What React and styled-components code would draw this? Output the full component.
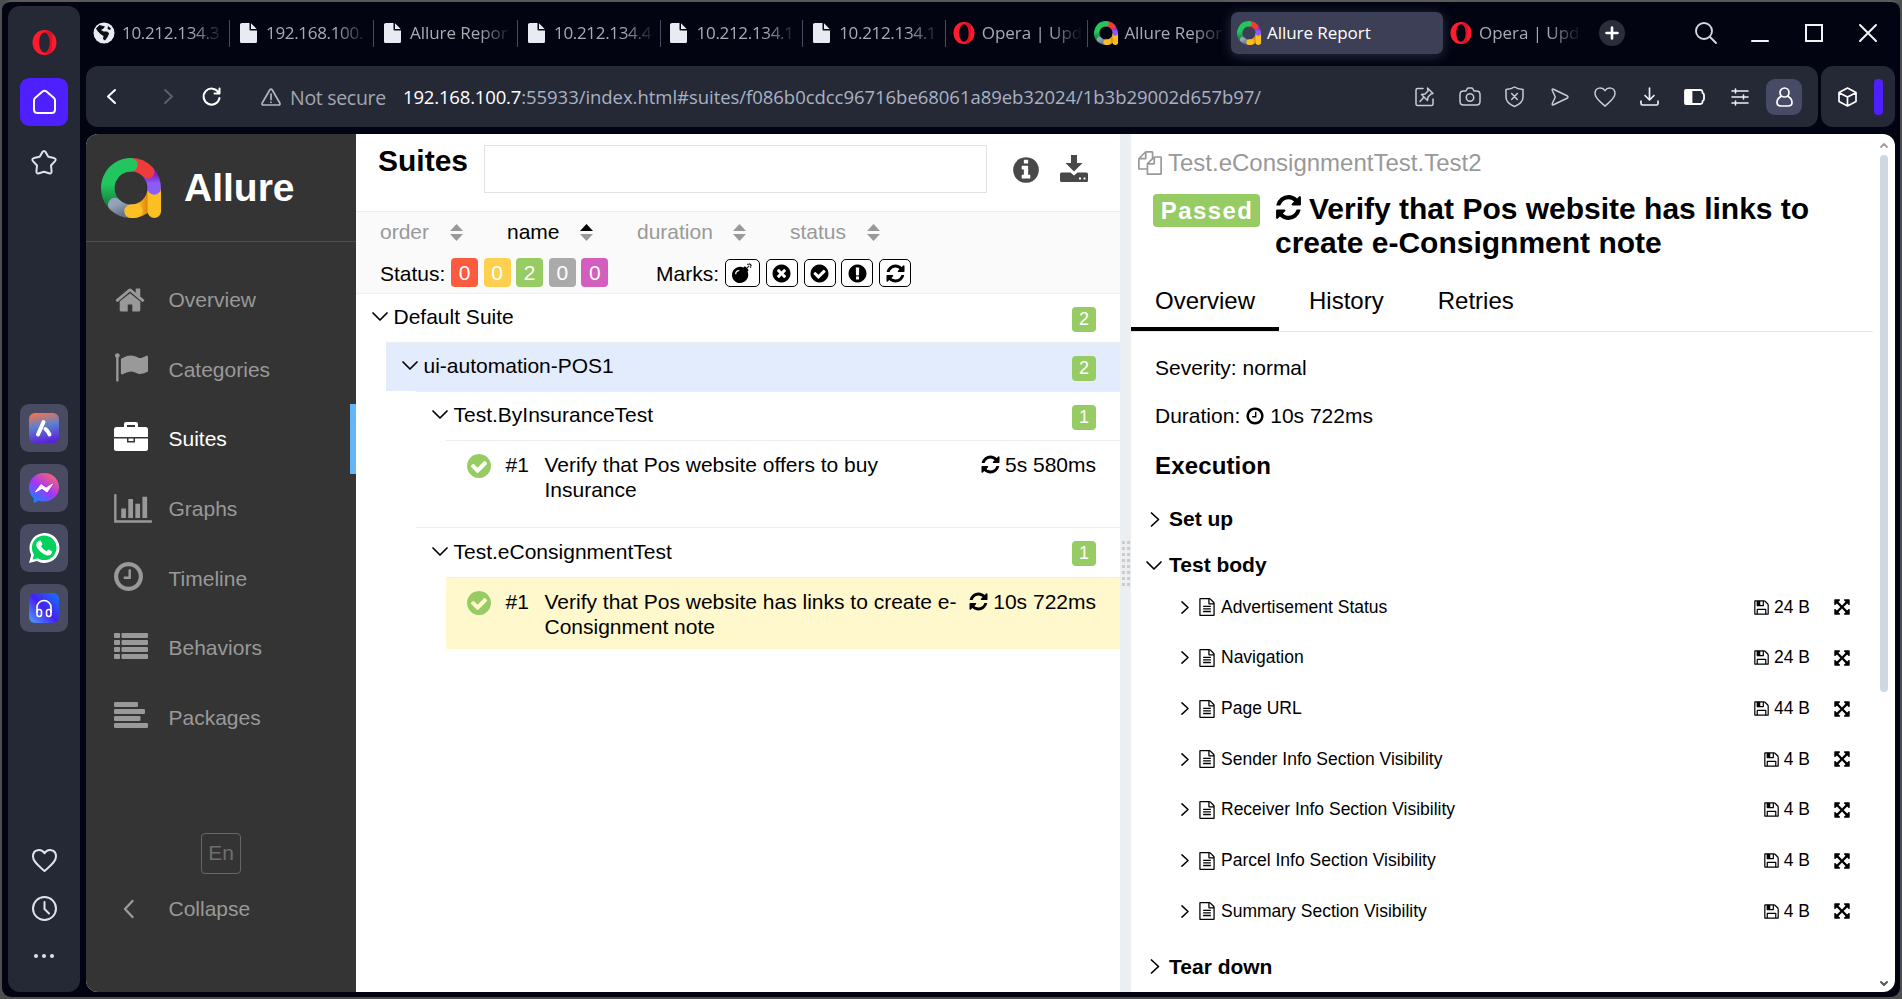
import React from "react";
import styled, { createGlobalStyle, css } from "styled-components";
import { FaBomb } from "react-icons/fa";

const Global = createGlobalStyle`
  *, *::before, *::after { box-sizing: border-box; }
  html, body, #root { height: 100%; margin: 0; }
  body { background: #4d4e50; overflow: hidden; font-family: "Liberation Sans", Arial, sans-serif; }
`;

/* ---------- icons ---------- */

const CIRCLE = "q0 209-103 385.5t-279.5 279.5-385.5 103-385.5-103-279.5-279.5-103-385.5 103-385.5 279.5-279.5 385.5-103 385.5 103 279.5 279.5 103 385.5z";

const GLYPHS = {
  home: "M1472 992v480q0 26-19 45t-45 19h-384v-384h-256v384h-384q-26 0-45-19t-19-45v-480q0-1 .5-3t.5-3l575-474 575 474q1 2 1 6zm223-69l-62 74q-8 9-21 11h-3q-13 0-21-7l-692-577-692 577q-12 8-24 7-13-2-21-11l-62-74q-8-10-7-23.5t11-21.5l719-599q32-26 76-26t76 26l244 204v-195q0-14 9-23t23-9h192q14 0 23 9t9 23v408l219 182q10 8 11 21.5t-7 23.5z",
  flag: "M256 192q0 72-64 110v1266q0 13-9.5 22.5t-22.5 9.5h-64q-13 0-22.5-9.5t-9.5-22.5v-1266q-64-38-64-110 0-53 37.5-90.5t90.5-37.5 90.5 37.5 37.5 90.5zm1536 64v763q0 25-12.5 38.5t-39.5 27.5q-215 116-369 116-61 0-123.5-22t-108.5-48-115.5-48-142.5-22q-192 0-464 146-17 9-33 9-26 0-45-19t-19-45v-742q0-32 31-55 21-14 79-43 236-120 421-120 107 0 200 29t219 88q38 19 88 19 54 0 117.5-21t110-47 88-47 54.5-21q26 0 45 19t19 45z",
  chart: "M640 896v512h-256v-512h256zm384-512v1024h-256v-1024h256zm1024 1152v128h-2048v-1536h128v1408h1920zm-640-896v768h-256v-768h256zm384-384v1152h-256v-1152h256z",
  clock: "M1024 544v448q0 14-9 23t-23 9h-320q-14 0-23-9t-9-23v-64q0-14 9-23t23-9h224v-352q0-14 9-23t23-9h64q14 0 23 9t9 23zm416 352q0-148-73-273t-198-198-273-73-273 73-198 198-73 273 73 273 198 198 273 73 273-73 198-198 73-273zm224 0" + CIRCLE,
  refresh: "M1639 1056q0 5-1 7-64 268-268 434.5t-478 166.5q-146 0-282.5-55t-243.5-157l-129 129q-19 19-45 19t-45-19-19-45v-448q0-26 19-45t45-19h448q26 0 45 19t19 45-19 45l-137 137q71 66 161 102t187 36q134 0 250-65t186-179q11-17 53-117 8-23 30-23h192q13 0 22.5 9.5t9.5 22.5zm25-800v448q0 26-19 45t-45 19h-448q-26 0-45-19t-19-45 19-45l138-138q-148-137-349-137-134 0-250 65t-186 179q-11 17-53 117-8 23-30 23h-199q-13 0-22.5-9.5t-9.5-22.5v-7q65-268 270-434.5t480-166.5q146 0 284 55.5t245 156.5l130-129q19-19 45-19t45 19 19 45z",
  check: "M1412 734q0-28-18-46l-91-90q-19-19-45-19t-45 19l-408 407-226-226q-19-19-45-19t-45 19l-91 90q-18 18-18 46 0 27 18 45l362 362q19 19 45 19 27 0 46-19l543-543q18-18 18-45zm252 162" + CIRCLE,
  times: "M1277 1122q0-26-19-45l-181-181 181-181q19-19 19-45 0-27-19-46l-90-90q-19-19-46-19-26 0-45 19l-181 181-181-181q-19-19-45-19-27 0-46 19l-90 90q-19 19-19 46 0 26 19 45l181 181-181 181q-19 19-19 45 0 27 19 46l90 90q19 19 46 19 26 0 45-19l181-181 181 181q19 19 45 19 27 0 46-19l90-90q19-19 19-46zm387-226" + CIRCLE,
  exclamation: "M896 128q209 0 385.5 103t279.5 279.5 103 385.5-103 385.5-279.5 279.5-385.5 103-385.5-103-279.5-279.5-103-385.5 103-385.5 279.5-279.5 385.5-103zm128 1247v-190q0-14-9-23.5t-22-9.5h-192q-13 0-23 10t-10 23v190q0 13 10 23t23 10h192q13 0 22-9.5t9-23.5zm-2-344l18-621q0-12-10-18-10-8-24-8h-220q-14 0-24 8-10 6-10 18l17 621q0 10 10 17.5t24 7.5h185q14 0 23.5-7.5t10.5-17.5z",
  info: "M1152 1376v-160q0-14-9-23t-23-9h-96v-512q0-14-9-23t-23-9h-320q-14 0-23 9t-9 23v160q0 14 9 23t23 9h96v320h-96q-14 0-23 9t-9 23v160q0 14 9 23t23 9h448q14 0 23-9t9-23zm-128-896v-160q0-14-9-23t-23-9h-192q-14 0-23 9t-9 23v160q0 14 9 23t23 9h192q14 0 23-9t9-23zm640 416" + CIRCLE,
  floppy: "M512 1536h768v-384h-768v384zm896 0h128v-896q0-14-10-38.5t-20-34.5l-281-281q-10-10-34-20t-39-10v416q0 40-28 68t-68 28h-576q-40 0-68-28t-28-68v-416h-128v1280h128v-416q0-40 28-68t68-28h832q40 0 68 28t28 68v416zm-384-928v-320q0-13-9.5-22.5t-22.5-9.5h-192q-13 0-22.5 9.5t-9.5 22.5v320q0 13 9.5 22.5t22.5 9.5h192q13 0 22.5-9.5t9.5-22.5zm640 32v928q0 40-28 68t-68 28h-1344q-40 0-68-28t-28-68v-1344q0-40 28-68t68-28h928q40 0 88 20t76 48l280 280q28 28 48 76t20 88z",
  file: "M1596 380q28 28 48 76t20 88v1152q0 40-28 68t-68 28h-1344q-40 0-68-28t-28-68v-1600q0-40 28-68t68-28h896q40 0 88 20t76 48zm-444-244v376h376q-10-29-22-41l-313-313q-12-12-41-22zm384 1528v-1024h-416q-40 0-68-28t-28-68v-416h-768v1536h1280zm-1024-896h768v128h-768zm0 256h768v128h-768zm0 256h768v128h-768z",
  expand: "M1411 541l-355 355 355 355 144-144q29-31 70-14 39 17 39 59v448q0 26-19 45t-45 19h-448q-42 0-59-40-17-39 14-69l144-144-355-355-355 355 144 144q31 30 14 69-17 40-59 40h-448q-26 0-45-19t-19-45v-448q0-42 40-59 39-17 69 14l144 144 355-355-355-355-144 144q-19 19-45 19-12 0-24-5-40-17-40-59v-448q0-26 19-45t45-19h448q42 0 59 40 17 39-14 69l-144 144 355 355 355-355-144-144q-31-30-14-69 17-40 59-40h448q26 0 45 19t19 45v448q0 42-39 59-13 5-25 5-26 0-45-19z",
  files: "M1696 384q40 0 68 28t28 68v1216q0 40-28 68t-68 28h-960q-40 0-68-28t-28-68v-288h-544q-40 0-68-28t-28-68v-672q0-40 20-88t48-76l408-408q28-28 76-48t88-20h416q40 0 68 28t28 68v328q68-40 128-40h416zm-544 213l-299 299h299v-299zm-640-384l-299 299h299v-299zm196 647l316-316v-416h-384v416q0 40-28 68t-68 28h-416v640h512v-256q0-40 20-88t48-76zm956 804v-1152h-384v416q0 40-28 68t-68 28h-416v640h896z",
};

const Svg = styled.svg`
  display: block;
  flex: none;
  overflow: visible;
  width: ${(p) => p.$w}px;
  height: ${(p) => p.$h || p.$w}px;
`;

const Glyph = ({ name, size, color = "currentColor" }) => (
  <Svg $w={size} viewBox="0 0 1792 1792" fill={color}><path d={GLYPHS[name]} /></Svg>
);

const Line = ({ w, h = w, box, sw = 1.5, color = "currentColor", children }) => (
  <Svg $w={w} $h={h} viewBox={box || `0 0 ${w} ${h}`} fill="none" stroke={color} strokeWidth={sw} strokeLinecap="round" strokeLinejoin="round">{children}</Svg>
);

const AllureLogo = ({ size, id }) => (
  <Svg $w={size} viewBox="0 0 60 60" fill="none" strokeLinecap="round" strokeWidth="13.5">
    <defs>
      <linearGradient id={id + "g"} x1="0" y1="0" x2="0" y2="1"><stop offset=".5" stopColor="#22c55e" /><stop offset="1" stopColor="#15803d" /></linearGradient>
      <linearGradient id={id + "p"} x1="0" y1="0" x2="0" y2="1"><stop offset=".1" stopColor="#7e22ce" /><stop offset=".7" stopColor="#8b5cf6" /></linearGradient>
      <linearGradient id={id + "s"} x1="0" y1="0" x2="1" y2="1"><stop offset="0" stopColor="#94a3b8" /><stop offset="1" stopColor="#64748b" /></linearGradient>
      <linearGradient id={id + "y"} x1="0" y1="0" x2="1" y2="0"><stop offset=".3" stopColor="#fbbf24" /><stop offset=".8" stopColor="#d97706" /></linearGradient>
    </defs>
    <path d="M53.3 30A23.3 23.3 0 0 1 30 53.2" stroke={`url(#${id}y)`} strokeLinecap="butt" />
    <path d="M53.3 34V53.2" stroke="#fbbf24" />
    <path d="M48 15.500A23.3 23.3 0 0 1 53.2 30" stroke={`url(#${id}p)`} />
    <path d="M30 6.8A23.3 23.3 0 0 1 46.8 13.900" stroke="#ef3b3b" />
    <path d="M13.500 46.500A23.3 23.3 0 0 1 30 6.8" stroke={`url(#${id}g)`} />
    <path d="M30 53.2A23.3 23.3 0 0 1 13.700 46.600" stroke={`url(#${id}s)`} />
    <path d="M30 53.200q3 0 5-.4" stroke="#fbbf24" />
  </Svg>
);

const OperaLogo = ({ size }) => (
  <Svg $w={size} viewBox="0 0 24 24">
    <path fillRule="evenodd" fill="#ff1b2d" d="M12 0C5.300 0 .5 5.300.5 12S5.300 24 12 24 23.500 18.700 23.500 12 18.700 0 12 0zM12 2.400c2.900 0 5.100 4.200 5.100 9.600s-2.200 9.600-5.100 9.600S6.900 17.400 6.900 12 9.100 2.400 12 2.400z" />
    <path fill="#a70014" d="M12 2.400c2-1.600 5-1.500 7.200.3 1.500 1.500-1 18 0 18.600-2.200 1.800-5.200 1.900-7.200.3 2.900 0 5.100-4.200 5.100-9.600S14.900 2.400 12 2.400z" opacity=".35" />
  </Svg>
);

const DocIcon = () => (
  <Svg $w={17} $h={20} viewBox="0 0 17 20"><path fill="#e8ebf1" d="M2 0h7.500v6.500q0 1 1 1H17V18.500q0 1.500-1.500 1.500h-14Q0 20 0 18.500V1.500Q0 0 2 0zM11 .3 16.700 6H11z" /></Svg>
);

const GlobeIcon = () => (
  <Svg $w={22} viewBox="0 0 22 22"><circle cx="11" cy="11" r="10.5" fill="#e8ebf1" /><path fill="#0b0d18" d="M3 6.500 6.500 3l5.500 1.500-1.500 2L8 8l2.500 1.500h3.700l2 2-1.700 3.500-2.500 3.500-2-1.500.5-3-2.500-1.500L4.500 9zM15 4l3 2.500-1 1.500-2.500-1z" /></Svg>
);

const Chevron = ({ open, small }) =>
  open ? (
    <Line w={16} h={9} sw={1.7}><path d="M1 1l7 7 7-7" /></Line>
  ) : (
    <Line w={small ? 8 : 10} h={small ? 13 : 15} box="0 0 9 15" sw={1.7}><path d="M1 1l7 6.500L1 14" /></Line>
  );

const SortArrows = ({ up }) => (
  <Svg $w={13} $h={17} viewBox="0 0 13 17"><path d="M0 7 6.500 0 13 7z" fill={up ? "#000" : "#999"} /><path d="M0 10h13L6.500 17z" fill="#999" /></Svg>
);

const Heart = ({ w, sw }) => (
  <Line w={w} h={w - 2} box="0 0 25 23" sw={sw}><path d="M12.500 4.200C9.500-.5 1 0 1 7.500c0 5.500 6 9.500 11.500 14.500C18 17 24 13 24 7.500 24 0 15.500-.5 12.500 4.200z" /></Line>
);

/* ---------- browser window ---------- */

const Window = styled.div`
  width: 1898px;
  height: 997px;
  margin: 0 2px;
  border-top: 2px solid #5a5a58;
  padding: 4px 5px 5px 6px;
  display: flex;
  gap: 6px;
  background: #020412;
  border-radius: 9px;
  overflow: hidden;
`;

const Rail = styled.nav`
  width: 72px;
  height: 986px;
  flex: none;
  border-radius: 12px;
  background: #252936;
  color: #dfe2ea;
  display: flex;
  flex-direction: column;
  align-items: center;
`;

const RailSlot = styled.div`
  width: 48px;
  height: 48px;
  flex: none;
  margin-bottom: ${(p) => p.$after || 0}px;
  border-radius: 9px;
  display: flex;
  align-items: center;
  justify-content: center;
  background: ${(p) => p.$bg || "transparent"};
`;

const AppTile = styled(RailSlot)`
  background: #484b61;
  margin-bottom: 12px;
`;

const Spacer = styled.div`
  height: ${(p) => p.$h}px;
  flex: none;
`;

const Main = styled.div`
  width: 1809px;
  flex: none;
  display: flex;
  flex-direction: column;
`;

const chromeFont = css`
  font-family: "Open Sans", "Noto Sans", sans-serif;
`;

const TabStrip = styled.div`
  ${chromeFont}
  height: 60px;
  display: flex;
  align-items: flex-start;
  padding-top: 6px;
`;

const Tab = styled.div`
  width: ${(p) => p.$w || 142.6}px;
  height: 42px;
  flex: none;
  display: flex;
  align-items: center;
  padding-left: 6px;
  border-radius: ${(p) => (p.$active ? 7 : 0)}px;
  background: ${(p) => (p.$active ? "#3c3f55" : "transparent")};
  box-shadow: ${(p) => (p.$active ? "0 2px 12px #45495e99" : "none")};
  color: ${(p) => (p.$active ? "#fff" : "#a9abb3")};
  &::after {
    content: "";
    width: ${(p) => (p.$sep ? 1 : 0)}px;
    height: 27px;
    background: #484b60;
  }
`;

const TabIcon = styled.div`
  width: 24px;
  flex: none;
  display: flex;
  justify-content: center;
`;

const TabTitle = styled.div`
  width: 101px;
  flex: 1;
  margin: 0 2px 0 6px;
  height: 26px;
  line-height: 25px;
  font-size: 17px;
  letter-spacing: ${(p) => p.$ls}px;
  white-space: nowrap;
  ${(p) => !p.$full && css`mask-image: linear-gradient(90deg, #000 66%, transparent 98%);`}
`;

const NewTab = styled.div`
  width: 26px;
  height: 26px;
  margin: 8px 70px 0 13px;
  flex: none;
  border-radius: 50%;
  background: #2b2e3a;
  display: flex;
  align-items: center;
  justify-content: center;
  color: #fff;
`;

const WinButton = styled.div`
  width: ${(p) => p.$w}px;
  height: 42px;
  flex: none;
  display: flex;
  align-items: center;
  justify-content: center;
  color: #f4f4f6;
`;

const BarRow = styled.div`
  display: flex;
  gap: 3px;
  height: 61px;
  margin-bottom: 7px;
`;

const Bar = styled.div`
  ${chromeFont}
  width: ${(p) => p.$w}px;
  flex: none;
  border-radius: 12px;
  background: #252936;
  display: flex;
  align-items: center;
`;

const BarIcon = styled.div`
  width: ${(p) => p.$w || 45}px;
  height: 36px;
  flex: none;
  display: flex;
  align-items: center;
  justify-content: center;
  color: ${(p) => p.$color || "#c9cbd3"};
`;

const Warning = styled(BarIcon)`
  width: 20px;
  margin-left: 38px;
  color: #b3b5be;
`;

const Profile = styled(BarIcon)`
  width: 36px;
  margin-left: 4px;
  border-radius: 9px;
  background: #484b66;
  color: #fff;
`;

const NotSecure = styled.span`
  margin: 1px 0 0 9px;
  width: 113px;
  flex: none;
  font-size: 19.5px;
  letter-spacing: -0.3px;
  color: #a3a6b1;
  white-space: nowrap;
`;

const Url = styled.span`
  width: 999px;
  flex: none;
  font-size: 18.5px;
  letter-spacing: -0.04px;
  color: #a9b1c3;
  white-space: nowrap;
  b { font-weight: 400; color: #fff; letter-spacing: -0.17px; }
`;

const PurpleBar = styled.div`
  width: 9px;
  height: 36px;
  border-radius: 4px;
  background: #4e1fff;
`;

/* ---------- report ---------- */

const Report = styled.div`
  height: 858px;
  border-radius: 12px;
  overflow: hidden;
  display: flex;
  background: #fff;
  font-size: 21px;
  color: #000;
`;

const Side = styled.aside`
  width: 270px;
  flex: none;
  background: #343434;
  color: #999;
  display: flex;
  flex-direction: column;
`;

const Brand = styled.div`
  height: 108px;
  padding-left: 15px;
  margin-bottom: 23px;
  border-bottom: 1px solid #4d4d4d;
  display: flex;
  align-items: center;
  gap: 23px;
  color: #fff;
  font-size: 39px;
  font-weight: 700;
`;

const NavItem = styled.div`
  height: 69.7px;
  flex: none;
  padding-left: 28px;
  display: flex;
  align-items: center;
  color: ${(p) => (p.$active ? "#fff" : "#999")};
  border-right: 6px solid ${(p) => (p.$active ? "#64b5f6" : "transparent")};
`;

const NavIcon = styled.div`
  width: 54.5px;
  padding: 0 0 ${(p) => p.$up || 0}px ${(p) => p.$x || 0}px;
`;

const Lang = styled.div`
  width: 40px;
  height: 41px;
  flex: none;
  margin: 80px 0 0 115px;
  border: 1px solid #666;
  border-radius: 4px;
  display: flex;
  align-items: center;
  justify-content: center;
  color: #6e6e6e;
`;

const ListPane = styled.section`
  width: 764px;
  flex: none;
`;

const ListHead = styled.header`
  height: 77px;
  padding-left: 22px;
  display: flex;
  align-items: flex-start;
  color: #484848;
  h1 { margin: 10px 0 0; width: 106px; font-size: 30px; line-height: 34px; color: #000; }
`;

const SearchBox = styled.div`
  width: 503px;
  height: 48px;
  margin: 11px 24px 0 0;
  border: 1px solid #e2e2e2;
`;

const HeadIcon = styled.div`
  margin-top: ${(p) => p.$top}px;
  width: ${(p) => p.$w}px;
`;

const Controls = styled.div`
  height: 83px;
  border-top: 1px solid #eceff1;
  border-bottom: 1px solid #eceff1;
  background: #fafafa;
`;

const SortRow = styled.div`
  height: 39px;
  padding-left: 24px;
  display: flex;
  align-items: center;
`;

const Sorter = styled.div`
  display: flex;
  align-items: center;
  justify-content: space-between;
  width: ${(p) => p.$w}px;
  margin-right: 44px;
  color: ${(p) => (p.$active ? "#000" : "#999")};
  svg { margin-top: 2px; }
`;

const FilterRow = styled.div`
  height: 42px;
  padding: 7px 0 0 24px;
  display: flex;
  align-items: flex-start;
`;

const FilterLabel = styled.div`
  width: ${(p) => p.$w}px;
  height: 30px;
  line-height: 32px;
  margin-left: ${(p) => p.$x || 0}px;
`;

const StatusBox = styled.div`
  width: 27px;
  height: 29px;
  margin-right: 5.6px;
  border-radius: 4px;
  line-height: 29px;
  text-align: center;
  color: #fff;
  background: ${(p) => p.$bg};
`;

const MarkBox = styled.div`
  width: ${(p) => p.$w || 32}px;
  height: 28px;
  margin: 1px 5.8px 0 0;
  border: 1px solid #000;
  border-radius: 5px;
  background: #fff;
  display: flex;
  align-items: center;
  justify-content: center;
`;

const Node = styled.div`
  height: ${(p) => p.$h || 49}px;
  margin-left: ${(p) => p.$x}px;
  padding: 0 24px 0 16px;
  display: flex;
  align-items: center;
  gap: 5.5px;
  background: ${(p) => (p.$selected ? "#e3ecfd" : "transparent")};
  border-top: ${(p) => (p.$line ? "1px solid #eceff1" : "0")};
  > svg { margin-bottom: 3px; }
`;

const NodeName = styled.div`
  flex: 1;
  height: 24px;
  line-height: 22px;
`;

const Count = styled.div`
  width: 24px;
  height: 25px;
  margin-top: 2px;
  border-radius: 4px;
  background: #97cc64;
  color: #fff;
  font-size: 18px;
  line-height: 25px;
  text-align: center;
`;

const Leaf = styled.div`
  height: ${(p) => p.$h}px;
  margin-left: 90px;
  padding: 11px 24px 0 19px;
  display: flex;
  line-height: 25px;
  border-top: 1px solid #eceff1;
  background: ${(p) => (p.$selected ? "#fff8cd" : "transparent")};
`;

const LeafStatus = styled.div`
  width: 40.5px;
`;

const LeafNumber = styled.div`
  width: 39px;
`;

const LeafName = styled.div`
  width: 415px;
  white-space: pre-line;
`;

const LeafTime = styled.div`
  flex: 1;
  display: flex;
  justify-content: flex-end;
  align-items: center;
  gap: 4px;
  height: 25px;
  white-space: nowrap;
`;

const Splitter = styled.div`
  width: 11px;
  flex: none;
  background: #eceff1;
  display: flex;
  align-items: flex-start;
  justify-content: flex-end;
  padding: 407px 1px 0 0;
`;

const Grip = styled.div`
  display: grid;
  grid-template-columns: 3px 3px;
  gap: 3px 2px;
  i { height: 3px; background: #ccc; }
`;

const Detail = styled.section`
  width: 742px;
  flex: none;
`;

const Crumb = styled.div`
  height: 48px;
  padding: 9px 0 0 7px;
  display: flex;
  align-items: center;
  gap: 6px;
  font-size: 24px;
  color: #999;
`;

const TitleRow = styled.div`
  height: 84px;
  padding: 10px 0 0 22px;
  display: flex;
  align-items: flex-start;
`;

const Passed = styled.div`
  width: 107px;
  height: 33px;
  margin: 2px 15px 0 0;
  border-radius: 4px;
  background: #97cc64;
  color: #fff;
  font-size: 24px;
  font-weight: 700;
  letter-spacing: 1.4px;
  line-height: 34px;
  padding-left: 1px;
  text-align: center;
`;

const Title = styled.h2`
  margin: 0;
  width: 560px;
  font-size: 30px;
  line-height: 34px;
  svg { display: inline-block; vertical-align: -3px; margin: 0 6px 0 -1px; }
`;

const Tabs = styled.div`
  height: 66px;
  display: flex;
  gap: 6px;
  border-bottom: 1px solid #e5e5e5;
`;

const DetailTab = styled.div`
  height: 65px;
  padding: 20px 24px 0;
  line-height: 30px;
  font-size: 24px;
  border-bottom: ${(p) => (p.$active ? "4px solid #000" : "0")};
`;

const Facts = styled.div`
  padding: 12px 0 0 24px;
`;

const Fact = styled.div`
  height: 48px;
  display: flex;
  align-items: center;
  gap: 5px;
`;

const Execution = styled.h3`
  margin: 0;
  height: 56px;
  line-height: 51px;
  font-size: 24px;
  letter-spacing: 0.15px;
`;

const Stage = styled.div`
  height: ${(p) => p.$h}px;
  padding-left: 15px;
  display: flex;
  align-items: center;
  font-weight: 700;
`;

const StageArrow = styled.div`
  width: 23px;
  display: flex;
  padding-left: ${(p) => (p.$open ? 0 : 4)}px;
`;

const Attachments = styled.div`
  margin-top: -6px;
`;

const Attachment = styled.div`
  height: 50.67px;
  padding: 0 22px 0 50px;
  display: flex;
  align-items: center;
  font-size: 17.5px;
`;

const AttachIcon = styled.div`
  width: ${(p) => p.$w}px;
`;

const AttachName = styled.div`
  flex: 1;
`;

const AttachSize = styled.div`
  display: flex;
  align-items: center;
  gap: 4px;
  margin-right: 23px;
`;

const ScrollTrack = styled.div`
  flex: 1;
  display: flex;
  flex-direction: column;
  align-items: center;
  padding: 9px 1px 6px 0;
  color: #a0a0a0;
`;

const ScrollThumb = styled.div`
  width: 8px;
  height: 537px;
  margin: 7px 0 auto;
  border-radius: 4px;
  background: #cfd8e0;
`;

/* ---------- data ---------- */

const tabs = [
  ["globe", "10.212.134.3", 144], ["doc", "192.168.100.", 144], ["doc", "Allure Repor", 144], ["doc", "10.212.134.4"],
  ["doc", "10.212.134.1"], ["doc", "10.212.134.1"], ["opera", "Opera | Upd"], ["allure", "Allure Repor"],
];

const statuses = [["0", "#fd5a3e"], ["0", "#ffd050"], ["2", "#97cc64"], ["0", "#aaa"], ["0", "#d35ebe"]];

const attachments = [
  ["Advertisement Status", "24 B"], ["Navigation", "24 B"], ["Page URL", "44 B"], ["Sender Info Section Visibility", "4 B"],
  ["Receiver Info Section Visibility", "4 B"], ["Parcel Info Section Visibility", "4 B"], ["Summary Section Visibility", "4 B"],
];

const Briefcase = () => (
  <Svg $w={34} $h={29} viewBox="0 0 34 29" fill="currentColor"><path fillRule="evenodd" d="M2.500 5H10V2Q10 0 12 0H22Q24 0 24 2V5H31.500Q34 5 34 7.500V15H0V7.500Q0 5 2.500 5zM13 5H21V3H13z" /><path fillRule="evenodd" d="M0 16.500H34V26.500Q34 29 31.500 29H2.500Q0 29 0 26.500zM13 16.500V20.500H21V16.500H19.500V19H14.500V16.500z" /></Svg>
);

const ListIcon = () => (
  <Svg $w={34} $h={26} viewBox="0 0 34 26" fill="currentColor">
    {[0, 7, 14, 21].map((y) => <React.Fragment key={y}><rect y={y} width="6" height="5" rx="1" /><rect x="7.5" y={y} width="26.5" height="5" rx="1" /></React.Fragment>)}
  </Svg>
);

const AlignIcon = () => (
  <Svg $w={34} $h={26} viewBox="0 0 34 26" fill="currentColor">
    {[24, 31, 26.5, 34].map((w, i) => <rect key={i} y={i * 7} width={w} height="5" rx="1.2" />)}
  </Svg>
);

const navItems = [
  ["Overview", <Glyph name="home" size={32} />, 0, 0],
  ["Categories", <Glyph name="flag" size={33} />, 1, 2],
  ["Suites", <Briefcase />, 0, 6],
  ["Graphs", <Svg $w={38} $h={33} viewBox="0 0 2048 1792" fill="currentColor"><path d={GLYPHS.chart} /></Svg>, 0, 1],
  ["Timeline", <Svg $w={29} viewBox="128 128 1536 1536" fill="currentColor"><path d={GLYPHS.clock} /></Svg>, 0, 4],
  ["Behaviors", <ListIcon />, 0, 5],
  ["Packages", <AlignIcon />, 0, 5],
];

const toolIcons = [
  <Line w={19} h={20} sw={1.5}><path d="M8 1.500H2.500Q1 1.500 1 3v14q0 1.500 1.500 1.500h14Q18 18.500 18 17v-5M12.500 1l5.500 5.500-2 .5-3 3-.5 3.500-6-6 3.500-.5 3-3zM9 10l-4 4.500" /></Line>,
  <Line w={22} h={19} sw={1.5}><path d="M7 4l1-2q.5-1 1.500-1h3q1 0 1.500 1l1 2h2.500q3.500 0 3.500 3.500v7q0 3.500-3.500 3.500h-13Q1 18 1 14.500v-7Q1 4 4.500 4z" /><circle cx="11" cy="10.500" r="3.700" /></Line>,
  <Line w={19} h={21} sw={1.5}><path d="M9.500 1q3 2 8.500 2.500V11q0 6-8.500 9.500Q1 17 1 11V3.500Q6.500 3 9.500 1zM6.700 7.500l5.600 6M12.300 7.500l-5.600 6" /></Line>,
  <Line w={18} h={18} sw={1.5}><path d="M2.500 1.200l13.500 6.500q2 1.300 0 2.600L2.500 16.800q-1.800.5-1.200-1.300L4.300 9l-3-6.500q-.6-1.800 1.200-1.300z" /></Line>,
  <Heart w={22} sw={1.7} />,
  <Line w={19} h={19} sw={1.7} color="#eceef2"><path d="M9.500 1v11.500M5 8.500l4.500 4.500L14 8.500M1 14v2.500Q1 18 2.500 18h14q1.500 0 1.500-1.500V14" /></Line>,
  <Line w={21} h={16} sw={1.8} color="#fff"><path d="M2 1H16.500q1.500 0 2 1.500v1.500q1.500.5 1.500 2v4q0 1.500-1.500 2v1.500q-.5 1.500-2 1.500H2Q1 15 1 14V2Q1 1 2 1z" /><path d="M2 2h5.500v12H2z" fill="#fff" /></Line>,
  <Line w={18} h={18} sw={1.6} color="#eceef2"><path d="M1 3h16M1 9h16M1 15h16M4.500 1v4M12.500 7v4M4.500 13v4" /></Line>,
];

function TabGlyph({ kind, id }) {
  return (
    <TabIcon>
      {kind === "globe" && <GlobeIcon />}
      {kind === "doc" && <DocIcon />}
      {kind === "opera" && <OperaLogo size={22} />}
      {kind === "allure" && <AllureLogo size={24} id={id} />}
    </TabIcon>
  );
}

function BrowserRail() {
  return (
    <Rail>
      <Spacer $h={12} />
      <RailSlot $after={12}><OperaLogo size={25} /></RailSlot>
      <RailSlot $bg="#4e1fff" $after={12}>
        <Line w={23} h={24} sw={2} color="#fff"><path d="M1 10.500q0-1.500 1-2.500L9.500 1.500q2-1.500 4 0L21 8q1 1 1 2.500V19.500q0 3.500-3.500 3.500h-14Q1 23 1 19.500z" /></Line>
      </RailSlot>
      <RailSlot><Line w={26} h={25} sw={2}><path d="M11.300 2.200q1.700-2.400 3.400 0l2.600 4.600 5.800 1.300q2.600.8.9 3l-4 4.400.6 6q-.1 2.600-2.600 1.700L13 21.800l-5 1.400q-2.500.9-2.600-1.700l.6-6-4-4.400q-1.700-2.200.9-3l5.800-1.300z" /></Line></RailSlot>
      <Spacer $h={218} />
      <AppTile>
        <Svg $w={30} viewBox="0 0 30 30">
          <defs><linearGradient id="aria" x1=".3" y1="0" x2=".5" y2="1"><stop offset="0" stopColor="#f0764d" /><stop offset=".45" stopColor="#5a7fd0" /><stop offset="1" stopColor="#5b21d6" /></linearGradient></defs>
          <rect width="30" height="30" rx="6" fill="url(#aria)" /><path d="M9 21.500 14.500 9" stroke="#fff" strokeWidth="4" strokeLinecap="round" /><path d="M16.500 16q2.500 2 4 5.500" stroke="#fff" strokeWidth="4" fill="none" strokeLinecap="round" />
        </Svg>
      </AppTile>
      <AppTile>
        <Svg $w={30} viewBox="0 0 30 30">
          <defs><linearGradient id="msgr" x1=".15" y1="1" x2=".8" y2="0"><stop offset="0" stopColor="#0a8cff" /><stop offset=".5" stopColor="#a334fa" /><stop offset="1" stopColor="#ff6968" /></linearGradient></defs>
          <path fill="url(#msgr)" d="M15 0C6.500 0 0 6.200 0 14.500c0 4.400 1.800 8.100 4.700 10.700V30l4.600-2.300c1.700.5 3.600.8 5.700.8 8.500 0 15-6 15-14.200S23.500 0 15 0z" /><path d="M6.500 19 12 11.500l5 3.700 6.500-4.200-5.500 8-5-3.700z" fill="#fff" stroke="#fff" strokeWidth="1" strokeLinejoin="round" />
        </Svg>
      </AppTile>
      <AppTile>
        <Svg $w={30} viewBox="0 0 30 30">
          <path d="M0 30 2.200 22A15 15 0 1 1 8 28z" fill="#fff" /><circle cx="15.200" cy="14.800" r="12.300" fill="#04d05e" /><path d="M3.500 26.500 5.500 20l5 5z" fill="#04d05e" />
          <path d="M10.500 7.700q1.300-.4 1.800 1l1 2.300q.2.700-1.300 2.300 2 3.800 5.500 5 1.500-1.900 2.100-1.700l3 1.500q.8.400.3 1.800-1 2.600-4.400 2.500-5.300-.7-9.700-6.600-3.200-4.600.2-7.600z" fill="#fff" />
        </Svg>
      </AppTile>
      <AppTile>
        <Svg $w={30} viewBox="0 0 30 30">
          <defs><linearGradient id="player" x1="0" y1="1" x2="1" y2="0"><stop offset="0" stopColor="#4da3ff" /><stop offset=".5" stopColor="#4422ee" /><stop offset="1" stopColor="#1677ff" /></linearGradient></defs>
          <rect width="30" height="30" rx="6" fill="url(#player)" /><path d="M8 20v-5.500a7 7 0 0 1 14 0V20" fill="none" stroke="#fff" strokeWidth="1.600" /><rect x="8" y="16.500" width="4.500" height="7" rx="2.200" fill="none" stroke="#fff" strokeWidth="1.600" /><rect x="17.500" y="16.500" width="4.500" height="7" rx="2.200" fill="none" stroke="#fff" strokeWidth="1.600" />
        </Svg>
      </AppTile>
      <Spacer $h={192} />
      <RailSlot><Heart w={25} sw={2} /></RailSlot>
      <RailSlot><Line w={25} sw={2}><circle cx="12.500" cy="12.500" r="11.500" /><path d="M12.500 6v7l4.500 4.500" /></Line></RailSlot>
      <RailSlot><Svg $w={20} $h={4} viewBox="0 0 20 4" fill="#dfe2ea"><circle cx="2" cy="2" r="2" /><circle cx="10" cy="2" r="2" /><circle cx="18" cy="2" r="2" /></Svg></RailSlot>
    </Rail>
  );
}

function BrowserTop() {
  return (
    <>
      <TabStrip>
        {tabs.map(([kind, title, w], i) => (
          <Tab key={i} $w={w} $sep={i < 7}><TabGlyph kind={kind} id={"t" + i} /><TabTitle $ls={/\d/.test(title) ? -0.32 : -0.05}>{title}</TabTitle></Tab>
        ))}
        <Tab $active $w={212}><TabGlyph kind="allure" id="ta" /><TabTitle $full $ls={-0.05}>Allure Report</TabTitle></Tab>
        <Tab><TabGlyph kind="opera" /><TabTitle $ls={-0.05}>Opera | Upda</TabTitle></Tab>
        <NewTab><Line w={12} sw={2.6}><path d="M6 .5v11M.5 6h11" /></Line></NewTab>
        <WinButton $w={22}><Line w={22} sw={1.9} color="#d5d7de"><circle cx="9" cy="9" r="8" /><path d="M15 15l6 6" /></Line></WinButton>
        <WinButton $w={87}><Line w={18} sw={2}><path d="M1 17h16" /></Line></WinButton>
        <WinButton $w={21}><Svg $w={18}><rect x="1" y="1" width="16" height="16" fill="none" stroke="#f4f4f6" strokeWidth="2" /></Svg></WinButton>
        <WinButton $w={87}><Line w={18} sw={2}><path d="M1 1l16 16M17 1L1 17" /></Line></WinButton>
      </TabStrip>
      <BarRow>
        <Bar $w={1732}>
          <BarIcon $w={51} $color="#fff"><Line w={9} h={15} sw={2}><path d="M8 1L1 7.500 8 14" /></Line></BarIcon>
          <BarIcon $w={62} $color="#5c5f6b"><Line w={9} h={15} sw={2}><path d="M1 1l7 6.500L1 14" /></Line></BarIcon>
          <BarIcon $w={24} $color="#fff"><Line w={19} sw={2}><path d="M16.500 5.500A8 8 0 1 0 17.500 11M17.500 1.500v5h-5" /></Line></BarIcon>
          <Warning><Line w={20} h={18} sw={1.7}><path d="M8.700 2q1.300-2 2.600 0l7.500 13q.8 2-1.300 2h-15q-2.100 0-1.300-2zM10 6v5.500M10 14v.3" /></Line></Warning>
          <NotSecure>Not secure</NotSecure>
          <Url><b>192.168.100.7</b>:55933/index.html#suites/f086b0cdcc96716be68061a89eb32024/1b3b29002d657b97/</Url>
          {toolIcons.map((icon, i) => <BarIcon key={i}>{icon}</BarIcon>)}
          <Profile><Line w={17} h={20} sw={1.7}><circle cx="8.500" cy="5.500" r="4.500" /><path d="M5 9.500q-4 2-4 6 0 3.500 4 3.500h7q4 0 4-3.500 0-4-4-6" /></Line></Profile>
        </Bar>
        <Bar $w={74}>
          <BarIcon $w={53} $color="#fff"><Line w={19} h={20} sw={1.7}><path d="M9.500 1l8.500 4.500v9L9.500 19 1 14.500v-9zM1.500 6l8 4 8-4M9.500 10v8.500" /></Line></BarIcon>
          <PurpleBar />
        </Bar>
      </BarRow>
    </>
  );
}

function Sidebar() {
  return (
    <Side>
      <Brand><AllureLogo size={60} id="brand" />Allure</Brand>
      {navItems.map(([label, icon, x, up]) => (
        <NavItem key={label} $active={label === "Suites"}><NavIcon $x={x} $up={up}>{icon}</NavIcon>{label}</NavItem>
      ))}
      <Lang>En</Lang>
      <NavItem><NavIcon $x={9}><Line w={11} h={18} sw={2.4}><path d="M9.500 1L2 9l7.500 8" /></Line></NavIcon>Collapse</NavItem>
    </Side>
  );
}

function SuiteTree() {
  return (
    <ListPane>
      <ListHead>
        <h1>Suites</h1>
        <SearchBox />
        <HeadIcon $top={21} $w={49}><Glyph name="info" size={30} /></HeadIcon>
        <HeadIcon $top={21} $w={30}>
          <Svg $w={28} $h={27} viewBox="0 0 28 27" fill="currentColor"><path d="M11 0h6v8h5.500L14 16.500 5.500 8H11z" /><path fillRule="evenodd" d="M1.500 17.500H10.500L14 20.500 17.500 17.500H26.500Q28 17.500 28 19V25.500Q28 27 26.500 27H1.500Q0 27 0 25.500V19Q0 17.500 1.500 17.500zM19 22.500v2h2v-2zM23.500 22.500v2h2v-2z" /></Svg>
        </HeadIcon>
      </ListHead>
      <Controls>
        <SortRow>
          <Sorter $w={83}>order<SortArrows /></Sorter>
          <Sorter $w={86} $active>name<SortArrows up /></Sorter>
          <Sorter $w={109}>duration<SortArrows /></Sorter>
          <Sorter $w={90}>status<SortArrows /></Sorter>
        </SortRow>
        <FilterRow>
          <FilterLabel $w={71}>Status:</FilterLabel>
          {statuses.map(([n, bg], i) => <StatusBox key={i} $bg={bg}>{n}</StatusBox>)}
          <FilterLabel $w={69} $x={42}>Marks:</FilterLabel>
          <MarkBox $w={35}><FaBomb size={20} /></MarkBox>
          <MarkBox><Glyph name="times" size={21} /></MarkBox>
          <MarkBox><Glyph name="check" size={21} /></MarkBox>
          <MarkBox><Glyph name="exclamation" size={21} /></MarkBox>
          <MarkBox><Glyph name="refresh" size={21} /></MarkBox>
        </FilterRow>
      </Controls>
      <Node $x={0} $h={48}><Chevron open /><NodeName>Default Suite</NodeName><Count>2</Count></Node>
      <Node $x={30} $line $selected><Chevron open /><NodeName>ui-automation-POS1</NodeName><Count>2</Count></Node>
      <Node $x={60} $line><Chevron open /><NodeName>Test.ByInsuranceTest</NodeName><Count>1</Count></Node>
      <Leaf $h={87}>
        <LeafStatus><Glyph name="check" size={28} color="#97cc64" /></LeafStatus>
        <LeafNumber>#1</LeafNumber>
        <LeafName>{"Verify that Pos website offers to buy\nInsurance"}</LeafName>
        <LeafTime><Glyph name="refresh" size={21} />5s 580ms</LeafTime>
      </Leaf>
      <Node $x={60} $line $h={50}><Chevron open /><NodeName>Test.eConsignmentTest</NodeName><Count>1</Count></Node>
      <Leaf $h={72} $selected>
        <LeafStatus><Glyph name="check" size={28} color="#97cc64" /></LeafStatus>
        <LeafNumber>#1</LeafNumber>
        <LeafName>{"Verify that Pos website has links to create e-\nConsignment note"}</LeafName>
        <LeafTime><Glyph name="refresh" size={21} />10s 722ms</LeafTime>
      </Leaf>
    </ListPane>
  );
}

function TestDetail() {
  return (
    <Detail>
      <Crumb><Glyph name="files" size={24} />Test.eConsignmentTest.Test2</Crumb>
      <TitleRow>
        <Passed>Passed</Passed>
        <Title><Glyph name="refresh" size={29} />Verify that Pos website has links to create e-Consignment note</Title>
      </TitleRow>
      <Tabs>
        <DetailTab $active>Overview</DetailTab>
        <DetailTab>History</DetailTab>
        <DetailTab>Retries</DetailTab>
      </Tabs>
      <Facts>
        <Fact>Severity: normal</Fact>
        <Fact>Duration: <Glyph name="clock" size={20} /> 10s 722ms</Fact>
        <Execution>Execution</Execution>
      </Facts>
      <Stage $h={46}><StageArrow><Chevron /></StageArrow>Set up</Stage>
      <Stage $h={46}><StageArrow $open><Chevron open /></StageArrow>Test body</Stage>
      <Attachments>
        {attachments.map(([name, size]) => (
          <Attachment key={name}>
            <AttachIcon $w={17}><Chevron small /></AttachIcon>
            <AttachIcon $w={23}><Glyph name="file" size={18} /></AttachIcon>
            <AttachName>{name}</AttachName>
            <AttachSize><Glyph name="floppy" size={17} />{size}</AttachSize>
            <Glyph name="expand" size={18} />
          </Attachment>
        ))}
      </Attachments>
      <Stage $h={60}><StageArrow><Chevron /></StageArrow>Tear down</Stage>
    </Detail>
  );
}

export default function App() {
  return (
    <>
      <Global />
      <Window>
        <BrowserRail />
        <Main>
          <BrowserTop />
          <Report>
            <Sidebar />
            <SuiteTree />
            <Splitter><Grip>{Array.from({ length: 16 }, (_, i) => <i key={i} />)}</Grip></Splitter>
            <TestDetail />
            <ScrollTrack>
              <Line w={8} h={5} sw={1.8}><path d="M1 4l3-3 3 3" /></Line>
              <ScrollThumb />
              <Line w={8} h={5} sw={2} color="#555"><path d="M1 1l3 3 3-3" /></Line>
            </ScrollTrack>
          </Report>
        </Main>
      </Window>
    </>
  );
}
